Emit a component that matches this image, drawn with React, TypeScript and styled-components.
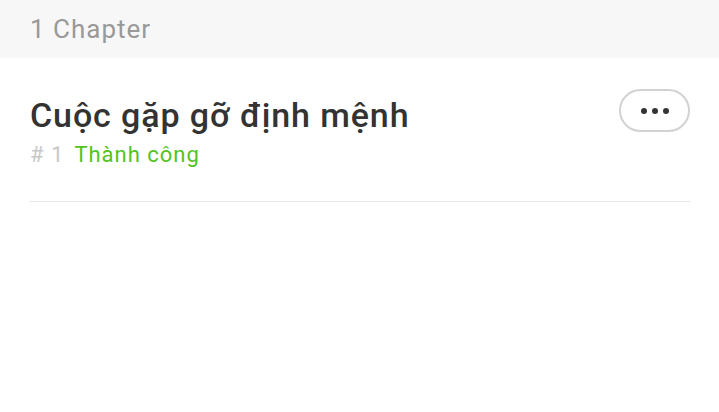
import React from "react";
import styled, { createGlobalStyle } from "styled-components";

const Global = createGlobalStyle`
  html, body { margin: 0; padding: 0; background: #fff; }
  body { font-family: Roboto, "Noto Sans", sans-serif; }
`;

const Page = styled.div`
  width: 719px;
  height: 412px;
  background: #fff;
`;

const Header = styled.div`
  height: 58px;
  background: #f7f7f7;
  display: flex;
  align-items: center;
  padding: 0 30px;
  box-sizing: border-box;
  font-size: 26px;
  letter-spacing: 1px;
  color: #999;
`;

const Item = styled.div`
  margin: 0 29px 0 30px;
  padding: 31px 0 33px;
  border-bottom: 1px solid #e6e6e6;
  display: flex;
  justify-content: space-between;
  align-items: flex-start;
`;

const Info = styled.div`
  display: flex;
  flex-direction: column;
`;

const Title = styled.div`
  font-size: 34px;
  font-weight: 500;
  letter-spacing: 0.9px;
  color: #333;
  line-height: 52px;
`;

const Meta = styled.div`
  display: flex;
  align-items: center;
  font-size: 22px;
  letter-spacing: 1px;
  line-height: 26px;
  margin-top: 1px;
`;

const Num = styled.span`
  color: #c8c8c8;
  margin-right: 10px;
`;

const Status = styled.span<{ $ok?: boolean }>`
  color: ${(p) => (p.$ok ? "#52c41a" : "#999")};
`;

const MoreButton = styled.button`
  width: 71px;
  height: 43px;
  border: 2px solid #d2d2d2;
  border-radius: 22px;
  background: #fff;
  display: flex;
  align-items: center;
  justify-content: center;
  gap: 5px;
  padding: 0;
`;

const Dot = styled.span`
  width: 6px;
  height: 6px;
  border-radius: 50%;
  background: #333;
`;

export default function App() {
  return (
    <Page>
      <Global />
      <Header>1 Chapter</Header>
      <Item>
        <Info>
          <Title>Cuộc gặp gỡ định mệnh</Title>
          <Meta>
            <Num># 1</Num>
            <Status $ok>Thành công</Status>
          </Meta>
        </Info>
        <MoreButton aria-label="more">
          <Dot />
          <Dot />
          <Dot />
        </MoreButton>
      </Item>
    </Page>
  );
}
